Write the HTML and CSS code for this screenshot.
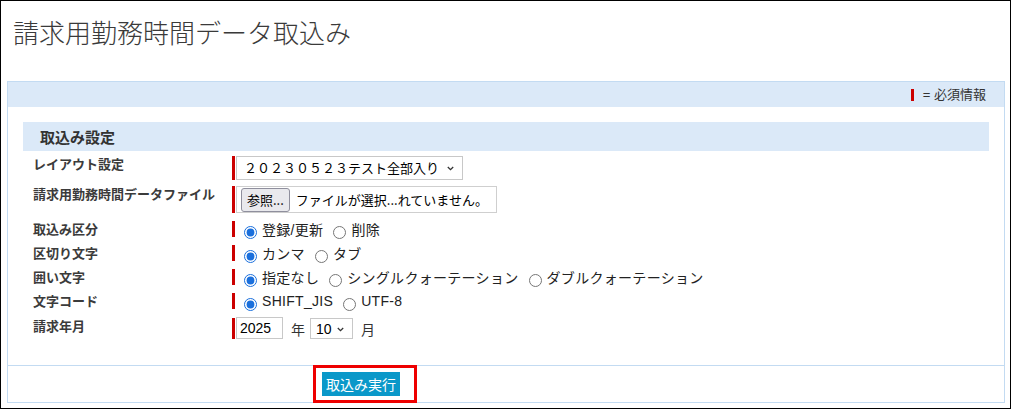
FILE: index.html
```html
<!DOCTYPE html>
<html lang="ja">
<head>
    <meta charset="UTF-8">
    <meta name="viewport" content="width=device-width, initial-scale=1.0">
    <title>請求用勤務時間データ取込み</title>
    <link rel="stylesheet" href="styles.css">
</head>
<body>
<div class="frame">
    <h1 class="page-title">請求用勤務時間データ取込み</h1>

    <div class="panel">
        <div class="panel-head">
            <span class="req-mark"></span>
            <span class="req-text">= 必須情報</span>
        </div>

        <div class="panel-body">
            <div class="section-title">取込み設定</div>

            <div class="form">
                <div class="row">
                    <div class="label">レイアウト設定</div>
                    <div class="value h-select">
                        <span class="select-wrap">
                            <select class="layout-select">
                                <option>２０２３０５２３テスト全部入り</option>
                            </select>
                            <svg class="chev" width="7" height="5" viewBox="0 0 7 5"><path d="M0.8 1 L3.5 3.7 L6.2 1" fill="none" stroke="#333" stroke-width="1.3"/></svg>
                        </span>
                    </div>
                </div>

                <div class="row row-file">
                    <div class="label">請求用勤務時間データファイル</div>
                    <div class="value h-file">
                        <div class="file-box">
                            <button type="button" class="file-btn">参照...</button>
                            <span class="file-name">ファイルが選択...れていません。</span>
                        </div>
                    </div>
                </div>

                <div class="row">
                    <div class="label">取込み区分</div>
                    <div class="value h-radio">
                        <label class="opt"><input type="radio" name="kubun" checked>登録/更新</label>
                        <label class="opt"><input type="radio" name="kubun">削除</label>
                    </div>
                </div>

                <div class="row">
                    <div class="label">区切り文字</div>
                    <div class="value h-radio">
                        <label class="opt"><input type="radio" name="sep" checked>カンマ</label>
                        <label class="opt"><input type="radio" name="sep">タブ</label>
                    </div>
                </div>

                <div class="row">
                    <div class="label">囲い文字</div>
                    <div class="value h-radio">
                        <label class="opt"><input type="radio" name="quote" checked>指定なし</label>
                        <label class="opt"><input type="radio" name="quote">シングルクォーテーション</label>
                        <label class="opt"><input type="radio" name="quote">ダブルクォーテーション</label>
                    </div>
                </div>

                <div class="row">
                    <div class="label">文字コード</div>
                    <div class="value h-radio">
                        <label class="opt"><input type="radio" name="enc" checked>SHIFT_JIS</label>
                        <label class="opt"><input type="radio" name="enc">UTF-8</label>
                    </div>
                </div>

                <div class="row row-date">
                    <div class="label">請求年月</div>
                    <div class="value h-date">
                        <input type="text" class="year-input" value="2025">
                        <span class="unit unit-year">年</span>
                        <span class="select-wrap">
                            <select class="month-select">
                                <option>10</option>
                            </select>
                            <svg class="chev" width="7" height="5" viewBox="0 0 7 5"><path d="M0.8 1 L3.5 3.7 L6.2 1" fill="none" stroke="#333" stroke-width="1.3"/></svg>
                        </span>
                        <span class="unit unit-month">月</span>
                    </div>
                </div>
            </div>
        </div>

        <div class="panel-foot">
            <div class="highlight">
                <button type="button" class="run-btn">取込み実行</button>
            </div>
        </div>
    </div>
</div>
</body>
</html>
```

FILE: styles.css
```css
* {
    margin: 0;
    padding: 0;
    box-sizing: border-box;
}

body {
    font-family: "Liberation Sans", "Noto Sans CJK JP", sans-serif;
    color: #333;
    background-color: #fff;
}

.frame {
    width: 1011px;
    height: 409px;
    border: 1px solid #000;
}

.page-title {
    padding: 15px 12px 0;
    font-family: "Noto Sans CJK JP", sans-serif;
    font-size: 26px;
    font-weight: 300;
    line-height: 31px;
    color: #3a3a3a;
}

/* main panel */
.panel {
    width: 998px;
    margin: 34px 0 0 6px;
    border: 1px solid #c3dbf2;
}

.panel-head {
    display: flex;
    align-items: center;
    justify-content: flex-end;
    height: 25px;
    padding-right: 18px;
    background-color: #dbe9f8;
    font-size: 13px;
}

.req-mark {
    display: inline-block;
    width: 3px;
    height: 12px;
    margin-right: 9px;
    background-color: #cc0000;
}

.req-text {
    line-height: 16px;
}

.panel-body {
    padding: 15px 15px 26px;
}

.section-title {
    height: 29px;
    padding-left: 17px;
    background-color: #dbe9f8;
    font-family: "Noto Sans CJK JP", sans-serif;
    font-size: 15px;
    font-weight: bold;
    line-height: 29px;
    color: #333;
}

/* form rows */
.form {
    display: flex;
    flex-direction: column;
    gap: 8px;
    margin-top: 5px;
}

.row {
    display: flex;
    align-items: flex-start;
}

.row-file {
    margin-top: -2px;
}

.row-date {
    margin-top: 1px;
}

.label {
    width: 209px;
    padding-left: 10px;
    font-family: "Noto Sans CJK JP", sans-serif;
    font-size: 13px;
    font-weight: bold;
    line-height: 16px;
    color: #3b3b3b;
}

.value {
    display: flex;
    align-items: center;
    border-left: 3px solid #cc0000;
    padding-left: 1px;
    font-size: 14px;
}

.h-select { height: 24px; }
.h-file   { height: 27px; }
.h-radio  { height: 16px; padding-left: 9px; }
.h-date   { height: 21px; }

/* selects with a drawn chevron */
.select-wrap {
    position: relative;
    display: inline-block;
}

.chev {
    position: absolute;
    top: 50%;
    right: 9px;
    margin-top: -2px;
    pointer-events: none;
}

select {
    display: block;
    appearance: none;
    -webkit-appearance: none;
    font-family: "Liberation Sans", "Noto Sans CJK JP", sans-serif;
    font-size: 13px;
    color: #000;
    background-color: #fff;
    border: 1px solid #c8c8c8;
    border-radius: 0;
}

.layout-select {
    width: 227px;
    height: 24px;
    padding-left: 7px;
}

.file-box {
    display: flex;
    align-items: center;
    width: 261px;
    height: 27px;
    border: 1px solid #cfcfcf;
    padding-left: 4px;
}

.file-btn {
    height: 24px;
    padding: 0 5px;
    font-family: "Noto Sans CJK JP", sans-serif;
    font-size: 13px;
    color: #000;
    background-color: #e9e9ed;
    border: 1px solid #8f8f9d;
    border-radius: 3px;
}

.file-name {
    margin-left: 6px;
    font-family: "Noto Sans CJK JP", sans-serif;
    font-size: 13px;
    color: #000;
    white-space: nowrap;
}

.opt {
    display: flex;
    align-items: center;
    margin-right: 10px;
    font-family: "Liberation Sans", "Noto Sans CJK JP", sans-serif;
    letter-spacing: 0.3px;
    white-space: nowrap;
    color: #222;
}

.opt input {
    width: 13px;
    height: 13px;
    margin: 6px 5px 0 0;
    accent-color: #1a6fdc;
}

.year-input {
    width: 47px;
    height: 22px;
    margin-top: -1px;
    padding-left: 3px;
    font-family: "Liberation Sans", sans-serif;
    font-size: 14px;
    color: #000;
    border: 1px solid #c8c8c8;
}

.unit {
    font-family: "Noto Sans CJK JP", sans-serif;
    font-size: 14px;
    color: #333;
}

.unit-year {
    margin: 0 5px 0 8px;
}

.unit-month {
    margin-left: 8px;
}

.month-select {
    width: 43px;
    height: 21px;
    padding-left: 5px;
    font-size: 14px;
}

/* footer with the run button */
.panel-foot {
    height: 37px;
    padding-left: 305px;
    border-top: 1px solid #c3dbf2;
}

.highlight {
    display: inline-block;
    margin-top: -1px;
    padding: 4px 14px 4px 6px;
    border: 3px solid #ee0000;
}

.run-btn {
    display: block;
    height: 24px;
    padding: 0 4px;
    font-family: "Noto Sans CJK JP", sans-serif;
    font-size: 14px;
    color: #fff;
    background-color: #0a98c9;
    border: none;
}
```
